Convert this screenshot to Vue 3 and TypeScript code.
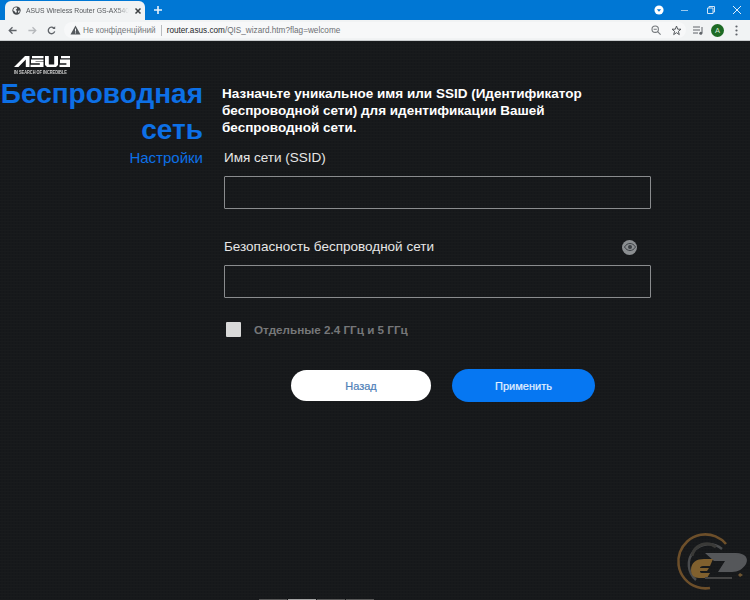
<script setup lang="ts">
import { ref } from "vue";

const ssid = ref("");
const password = ref("");
const separate = ref(false);
</script>

<template>
  <div class="window">
    <div class="tabstrip">
      <div class="tab">
        <svg class="globe" width="9" height="9" viewBox="0 0 12 12">
          <circle cx="6" cy="6" r="5.5" fill="#45494d" />
          <path d="M3 2.2 6 1.6 7 3.4 5 5 6.6 6.6 5.4 9.8 3.6 7.4 1.4 5.6Z" fill="#f0f2f4" />
          <path d="M8.2 6.4 10.4 6 9.4 9 8 8.6Z" fill="#f0f2f4" />
        </svg>
        <span class="tab-title">ASUS Wireless Router GS-AX540</span>
        <svg class="tab-close" width="8" height="8" viewBox="0 0 8 8">
          <path d="M1.5 1.5 6.5 6.5M6.5 1.5 1.5 6.5" stroke="#3c4043" stroke-width="1.5" />
        </svg>
      </div>
      <svg class="new-tab" width="8" height="8" viewBox="0 0 9 9">
        <path d="M4.5 0V9M0 4.5H9" stroke="#e8f3fc" stroke-width="1.8" />
      </svg>
      <div class="window-controls">
        <svg width="10" height="10" viewBox="0 0 12 12">
          <circle cx="6" cy="6" r="5.5" fill="#fff" />
          <path d="M3.4 5 8.6 5 6 8.2Z" fill="#0078d7" />
        </svg>
        <svg width="10" height="10" viewBox="0 0 10 10">
          <path d="M1 5.5H8" stroke="#9cc9ee" stroke-width="1" />
        </svg>
        <svg width="10" height="10" viewBox="0 0 10 10">
          <path d="M1.5 3H7V8.5H1.5ZM3 3V1.5H8.5V7H7" fill="none" stroke="#cfe4f6" stroke-width="1" />
        </svg>
        <svg width="10" height="10" viewBox="0 0 10 10">
          <path d="M1 1 9 9M9 1 1 9" stroke="#e1eefa" stroke-width="1" />
        </svg>
      </div>
    </div>

    <div class="toolbar">
      <svg width="9" height="9" viewBox="0 0 11 11">
        <path d="M10.5 5.5H1.5M5.5 1.5 1.5 5.5 5.5 9.5" fill="none" stroke="#5f6368" stroke-width="1.6" />
      </svg>
      <svg class="forward" width="9" height="9" viewBox="0 0 11 11">
        <path d="M.5 5.5H9.5M5.5 1.5 9.5 5.5 5.5 9.5" fill="none" stroke="#b6b9bc" stroke-width="1.6" />
      </svg>
      <svg class="reload" width="9" height="9" viewBox="0 0 11 11">
        <path d="M9.4 6.6A4 4 0 1 1 8.4 2.6" fill="none" stroke="#5f6368" stroke-width="1.6" />
        <path d="M6.4 3.8H10V.4Z" fill="#5f6368" />
      </svg>
      <div class="omnibox">
        <svg width="11" height="10" viewBox="0 0 11 10">
          <path d="M5.5 .5 10.5 9.5H.5Z" fill="#55595d" />
          <path d="M5.5 3.6V6.6M5.5 7.4V8.4" stroke="#f1f3f4" stroke-width="1" />
        </svg>
        <span class="insecure">Не конфіденційний</span>
        <span class="divider"></span>
        <span class="url"><b>router.asus.com</b>/QIS_wizard.htm?flag=welcome</span>
        <svg class="zoom-icon" width="10" height="10" viewBox="0 0 10 10">
          <circle cx="4.2" cy="4.2" r="3.2" fill="none" stroke="#75797d" stroke-width="1.1" />
          <path d="M6.6 6.6 9.6 9.6M2.6 4.2H5.8" stroke="#75797d" stroke-width="1.1" />
        </svg>
        <svg class="star" width="11" height="11" viewBox="0 0 11 11">
          <path d="M5.5 1 6.7 4.2H10L7.4 6.3 8.3 9.6 5.5 7.7 2.7 9.6 3.6 6.3 1 4.2H4.3Z" fill="none" stroke="#54585c" stroke-width="1" />
        </svg>
      </div>
      <svg class="queue" width="11" height="9" viewBox="0 0 11 9">
        <path d="M0 1H7M0 4H7M0 7H5M9 1V7" stroke="#5f6368" stroke-width="1" />
        <circle cx="7.8" cy="7.2" r="1.5" fill="#5f6368" />
      </svg>
      <span class="avatar">A</span>
      <svg class="more" width="3" height="11" viewBox="0 0 3 11">
        <circle cx="1.5" cy="1.5" r="1.1" fill="#5f6368" />
        <circle cx="1.5" cy="5.5" r="1.1" fill="#5f6368" />
        <circle cx="1.5" cy="9.5" r="1.1" fill="#5f6368" />
      </svg>
    </div>

    <div class="page">
      <aside class="side">
        <div class="logo">
          <svg width="56" height="11" viewBox="0 0 56 11">
            <path d="M0 11 11 0H15.5V11H11.8V3.4L4.4 11Z" fill="#fff" />
            <path d="M18 0H29.5V2.2H18ZM17 3.6H29.5V5H21.5V5.6H29.5V11H16.5V8.8H25.8V7.2H17Z" fill="#fff" />
            <path d="M31 0H34.8V8.4H40.2V0H44V9L42 11H33L31 9Z" fill="#fff" />
            <path d="M47 0H56V2.2H47ZM46 3.6H56V11H45.5V8.8H52.4V7.2H46Z" fill="#fff" />
          </svg>
          <span class="tagline">IN SEARCH OF INCREDIBLE</span>
        </div>
        <h1 class="title">Беспроводная сеть</h1>
        <div class="subtitle">Настройки</div>
      </aside>

      <main class="content">
        <p class="lead">Назначьте уникальное имя или SSID (Идентификатор беспроводной сети) для идентификации Вашей беспроводной сети.</p>

        <label class="field-label first">Имя сети (SSID)</label>
        <input v-model="ssid" class="field" type="text" />

        <div class="label-row">
          <label class="field-label">Безопасность беспроводной сети</label>
          <span class="eye">
            <svg width="12" height="8" viewBox="0 0 12 8">
              <path d="M.5 4C2 1.5 4 .5 6 .5S10 1.5 11.5 4C10 6.5 8 7.5 6 7.5S2 6.5 .5 4Z" fill="none" stroke="#3b3f44" stroke-width="1" />
              <circle cx="6" cy="4" r="2" fill="#3b3f44" />
            </svg>
          </span>
        </div>
        <input v-model="password" class="field" type="text" />

        <label class="check-row">
          <input v-model="separate" class="check" type="checkbox" />
          <span>Отдельные 2.4 ГГц и 5 ГГц</span>
        </label>

        <div class="actions">
          <button class="btn btn-back" type="button">Назад</button>
          <button class="btn btn-apply" type="button">Применить</button>
        </div>
      </main>

      <svg class="watermark" width="78" height="64" viewBox="0 0 78 64">
        <path d="M54 16A27 27 0 1 0 38 60" fill="none" stroke="#6d4f2a" stroke-width="2.6" />
        <path d="M50 21A20 20 0 1 0 24 52" fill="none" stroke="#4a4c4e" stroke-width="2.4" />
        <path d="M44 19A15 15 0 0 0 20 28" fill="none" stroke="#3a3a38" stroke-width="3" />
        <path d="M33 25H64C73 25 77 30 74 36C71 41 66 44 60 44H46L53 33H42Z" fill="#55575a" />
        <path d="M19 42C19 34 25 31 32 31H41L38 38H31C29 38 28 39 28 40H37L35 43H28C28 45 29 45 31 45H38L35 50H27C22 50 19 47 19 42Z" fill="#80602e" />
        <path d="M33 49H60V51H33Z" fill="#444" />
        <path d="M68 45 71 47 68 49 66 47Z" fill="#6d5532" />
      </svg>

      <div class="thumbs">
        <span></span><span class="active"></span><span></span><span></span>
      </div>
    </div>
  </div>
</template>

<style scoped>
.window {
  width: 750px;
  height: 600px;
  display: flex;
  flex-direction: column;
  overflow: hidden;
  font-family: "Liberation Sans", Arial, sans-serif;
}

.tabstrip {
  height: 20px;
  flex: none;
  background: #0077d4;
  display: flex;
  align-items: flex-end;
  padding-left: 5px;
}

.tab {
  width: 140px;
  height: 19px;
  padding: 0 5px 0 7px;
  box-sizing: border-box;
  background: #f1f3f4;
  border-radius: 6px 6px 0 0;
  display: flex;
  align-items: center;
  gap: 5px;
}

.globe {
  flex: none;
}

.tab-title {
  flex: 1;
  white-space: nowrap;
  font-size: 6.8px;
  color: #55585c;
  -webkit-mask-image: linear-gradient(to right, #000 88%, transparent);
  mask-image: linear-gradient(to right, #000 88%, transparent);
}

.tab-close {
  flex: none;
}

.new-tab {
  margin: 0 0 6px 9px;
}

.window-controls {
  margin-left: auto;
  height: 20px;
  display: flex;
  align-items: center;
  gap: 16px;
  padding-right: 8px;
}

.toolbar {
  height: 21px;
  flex: none;
  background: #f1f3f4;
  border-bottom: 1px solid #c9cbcd;
  box-sizing: border-box;
  display: flex;
  align-items: center;
  padding: 0 6px 0 8px;
}

.forward {
  margin-left: 11px;
}

.reload {
  margin-left: 10px;
}

.omnibox {
  width: 622px;
  height: 16px;
  margin-left: 8px;
  padding: 0 4px 0 6px;
  box-sizing: border-box;
  background: #f7f8f9;
  border-radius: 8px;
  display: flex;
  align-items: center;
  font-size: 8.2px;
  white-space: nowrap;
}

.insecure {
  margin-left: 2px;
  color: #75787c;
}

.divider {
  width: 1px;
  height: 11px;
  margin: 0 5px;
  background: #b9bcbf;
}

.url {
  color: #6d7074;
}

.url b {
  font-weight: 400;
  color: #26282b;
}

.zoom-icon {
  margin-left: auto;
}

.star {
  margin-left: 10px;
}

.queue {
  margin-left: 7px;
}

.avatar {
  width: 13px;
  height: 13px;
  margin-left: 7px;
  border-radius: 50%;
  background: #1d6a24;
  color: #d8e8d8;
  font-size: 7.5px;
  line-height: 13px;
  text-align: center;
}

.more {
  margin-left: 11px;
}

.page {
  flex: 1;
  position: relative;
  display: flex;
  background-color: #17191b;
  background-image:
    linear-gradient(#191b1d 1px, transparent 1px),
    linear-gradient(90deg, #15171a 1px, transparent 1px);
  background-size: 3px 3px;
}

.side {
  width: 203px;
  flex: none;
  text-align: right;
}

.logo {
  width: 56px;
  margin: 15px 0 0 14px;
  display: flex;
  flex-direction: column;
  text-align: left;
}

.tagline {
  margin-top: 2px;
  font-size: 5px;
  line-height: 6px;
  font-weight: 700;
  white-space: nowrap;
  color: #d0d0d0;
  transform: scaleX(0.78);
  transform-origin: left center;
}

.title {
  margin: 1px 0 0;
  font-size: 28px;
  line-height: 36px;
  font-weight: 700;
  color: #0d70e6;
}

.subtitle {
  font-size: 15px;
  line-height: 19px;
  color: #0d70e6;
}

.content {
  width: 427px;
  margin-left: 21px;
  display: flex;
  flex-direction: column;
}

.lead {
  margin: 44px 0 0 -2px;
  width: 380px;
  font-size: 13.5px;
  line-height: 17px;
  font-weight: 700;
  color: #fff;
}

.field-label {
  display: block;
  font-size: 13.5px;
  line-height: 18px;
  color: #e6e6e6;
}

.first {
  margin-top: 13px;
}

.field {
  width: 427px;
  height: 33px;
  box-sizing: border-box;
  margin-top: 9px;
  background: transparent;
  border: 1px solid #8a8c8e;
  border-radius: 1px;
  outline: none;
  color: #fff;
}

.label-row {
  margin-top: 29px;
  display: flex;
  justify-content: space-between;
  align-items: center;
  padding-right: 14px;
}

.eye {
  width: 15px;
  height: 15px;
  border-radius: 50%;
  background: #8b8e91;
  display: flex;
  align-items: center;
  justify-content: center;
}

.check-row {
  margin-top: 24px;
  display: flex;
  align-items: center;
  padding-left: 2px;
  font-size: 11.7px;
  font-weight: 700;
  color: #767779;
}

.check {
  appearance: none;
  width: 15px;
  height: 15px;
  margin: 0 13px 0 0;
  background: #d9d9d9;
  border-radius: 1px;
}

.actions {
  margin-top: 32px;
  padding-left: 67px;
  display: flex;
  align-items: center;
  gap: 21px;
}

.btn {
  border: none;
  border-radius: 17px;
  font-family: inherit;
  font-size: 11px;
  -webkit-text-stroke: 0.2px currentColor;
}

.btn-back {
  width: 140px;
  height: 31px;
  background: #fff;
  color: #4f7fb8;
}

.btn-apply {
  width: 143px;
  height: 33px;
  background: #0677f2;
  color: #e4f0ff;
}

.watermark {
  position: absolute;
  right: 0;
  bottom: 8px;
}

.thumbs {
  position: absolute;
  left: 259px;
  bottom: 0;
  display: flex;
  gap: 1px;
}

.thumbs span {
  width: 28px;
  height: 1px;
  background: #5a5a5a;
}

.thumbs .active {
  background: #a5a5a5;
}
</style>

<style>
html,
body {
  margin: 0;
  background: #17191b;
}
</style>
